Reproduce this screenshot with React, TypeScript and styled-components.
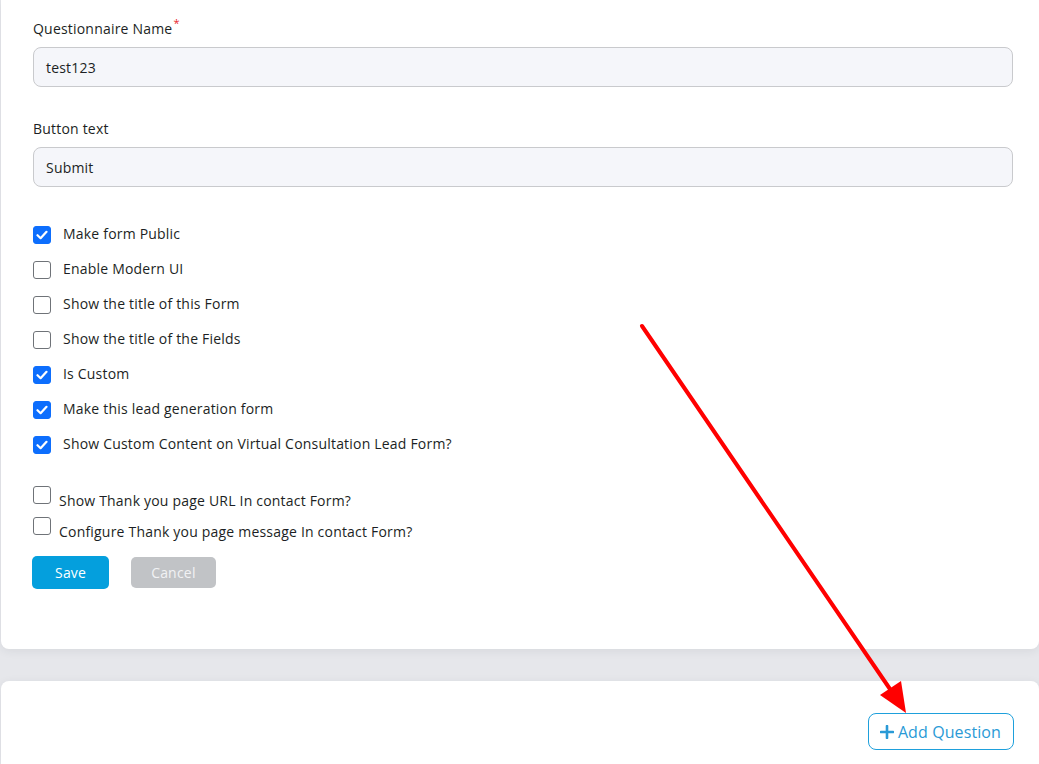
import React from "react";
import styled, { createGlobalStyle } from "styled-components";

const Global = createGlobalStyle`
  html, body { margin: 0; padding: 0; }
  body {
    background: #e6e7eb;
    font-family: "Open Sans", "Liberation Sans", sans-serif;
    color: #1f2328;
    overflow: hidden;
  }
  * { box-sizing: border-box; }
`;

const Page = styled.div`
  position: relative;
  width: 1039px;
  height: 764px;
  overflow: hidden;
  display: flex;
  flex-direction: column;
  gap: 32px;
`;

const Card = styled.section<{ $pad: string }>`
  background: #ffffff;
  margin-left: 1px;
  border-radius: 0 0 8px 8px;
  box-shadow: 0 2px 10px rgba(40, 45, 60, 0.08);
  padding: ${(p) => p.$pad};
`;

const BottomCard = styled(Card)`
  border-radius: 8px 8px 0 0;
  flex: 1;
  display: flex;
  justify-content: flex-end;
  align-items: flex-start;
`;

const Field = styled.div<{ $mb: number }>`
  display: flex;
  flex-direction: column;
  margin-bottom: ${(p) => p.$mb}px;
`;

const Label = styled.label`
  font-size: 14px;
  font-weight: 500;
  line-height: 20px;
  color: #1c1f24;
  margin-bottom: 8px;
  letter-spacing: 0.2px;
`;

const Req = styled.sup`
  color: #e8262b;
  font-size: 11px;
  line-height: 0;
  position: relative;
  top: -1px;
  margin-left: 1px;
`;

const Input = styled.div`
  height: 40px;
  border: 1px solid #c9cacd;
  border-radius: 8px;
  background: #f5f6fa;
  display: flex;
  align-items: center;
  padding: 0 12px;
  font-size: 14px;
  color: #1c1f24;
  letter-spacing: 0.2px;
`;

const CheckList = styled.div`
  display: flex;
  flex-direction: column;
  gap: 15px;
  margin-top: -2px;
`;

const CheckRow = styled.div`
  display: flex;
  align-items: center;
  gap: 12px;
  height: 20px;
  font-size: 14px;
  font-weight: 500;
  color: #1c1f24;
  letter-spacing: 0.2px;
`;

const Box = styled.span<{ $on: boolean; $offset: number }>`
  width: 18px;
  height: 18px;
  flex: none;
  border-radius: 3px;
  border: 1px solid ${(p) => (p.$on ? "#0d6efd" : "#6f7378")};
  background: ${(p) => (p.$on ? "#0d6efd" : "#fff")};
  display: flex;
  align-items: center;
  justify-content: center;
  margin-top: ${(p) => p.$offset}px;
`;

const ExtraList = styled.div`
  display: flex;
  flex-direction: column;
  gap: 6px;
  margin-top: 33px;
`;

const ExtraRow = styled.div`
  display: flex;
  align-items: flex-start;
  gap: 8px;
  font-size: 14px;
  font-weight: 500;
  color: #1c1f24;
  letter-spacing: 0.2px;
`;

const ExtraText = styled.span`
  margin-top: 5px;
  line-height: 20px;
`;

const Buttons = styled.div`
  display: flex;
  gap: 22px;
  align-items: center;
  margin-top: 14px;
  margin-left: -1px;
`;

const Btn = styled.button<{ $variant: "primary" | "muted" }>`
  font-family: inherit;
  font-size: 14px;
  font-weight: 500;
  letter-spacing: 0.2px;
  border: none;
  border-radius: 5px;
  color: ${(p) => (p.$variant === "primary" ? "#ffffff" : "#f1f2f4")};
  background: ${(p) => (p.$variant === "primary" ? "#049fdd" : "#c1c3c6")};
  height: ${(p) => (p.$variant === "primary" ? 33 : 31)}px;
  padding: 0 ${(p) => (p.$variant === "primary" ? 23 : 20)}px;
`;

const AddBtn = styled.button`
  font-family: inherit;
  display: flex;
  align-items: center;
  gap: 4px;
  height: 37px;
  padding: 0 12px 0 11px;
  border: 1px solid #1ea0dc;
  border-radius: 8px;
  background: #fff;
  color: #2a9ad6;
  font-size: 16px;
  letter-spacing: 0.1px;
`;

const Arrow = styled.svg`
  position: absolute;
  left: 0;
  top: 0;
  pointer-events: none;
`;

const Check = () => (
  <svg width="12" height="10" viewBox="0 0 12 10">
    <path d="M1.5 5.2 L4.6 8.2 L10.5 1.8" fill="none" stroke="#fff" strokeWidth="2.2" strokeLinecap="round" strokeLinejoin="round" />
  </svg>
);

const items: [string, boolean][] = [
  ["Make form Public", true],
  ["Enable Modern UI", false],
  ["Show the title of this Form", false],
  ["Show the title of the Fields", false],
  ["Is Custom", true],
  ["Make this lead generation form", true],
  ["Show Custom Content on Virtual Consultation Lead Form?", true],
];

export default function App() {
  return (
    <>
      <Global />
      <Page>
        <Card $pad="19px 26px 60px 32px">
          <Field $mb={32}>
            <Label>
              Questionnaire Name<Req>*</Req>
            </Label>
            <Input>test123</Input>
          </Field>
          <Field $mb={38}>
            <Label>Button text</Label>
            <Input>Submit</Input>
          </Field>
          <CheckList>
            {items.map(([t, on]) => (
              <CheckRow key={t}>
                <Box $on={on} $offset={4}>{on && <Check />}</Box>
                <span>{t}</span>
              </CheckRow>
            ))}
          </CheckList>
          <ExtraList>
            <ExtraRow>
              <Box $on={false} $offset={0} />
              <ExtraText>Show Thank you page URL In contact Form?</ExtraText>
            </ExtraRow>
            <ExtraRow>
              <Box $on={false} $offset={0} />
              <ExtraText>Configure Thank you page message In contact Form?</ExtraText>
            </ExtraRow>
          </ExtraList>
          <Buttons>
            <Btn $variant="primary">Save</Btn>
            <Btn $variant="muted">Cancel</Btn>
          </Buttons>
        </Card>
        <BottomCard $pad="32px 25px 0 32px">
          <AddBtn>
            <svg width="14" height="14" viewBox="0 0 14 14">
              <path d="M7 1v12M1 7h12" stroke="#2a9ad6" strokeWidth="2.6" strokeLinecap="round" />
            </svg>
            Add Question
          </AddBtn>
        </BottomCard>
        <Arrow width="1039" height="764" viewBox="0 0 1039 764">
          <line x1="642" y1="326" x2="892" y2="692" stroke="#ff0000" strokeWidth="4" strokeLinecap="round" />
          <polygon points="906,713 880,695 901,681" fill="#ff0000" />
        </Arrow>
      </Page>
    </>
  );
}
